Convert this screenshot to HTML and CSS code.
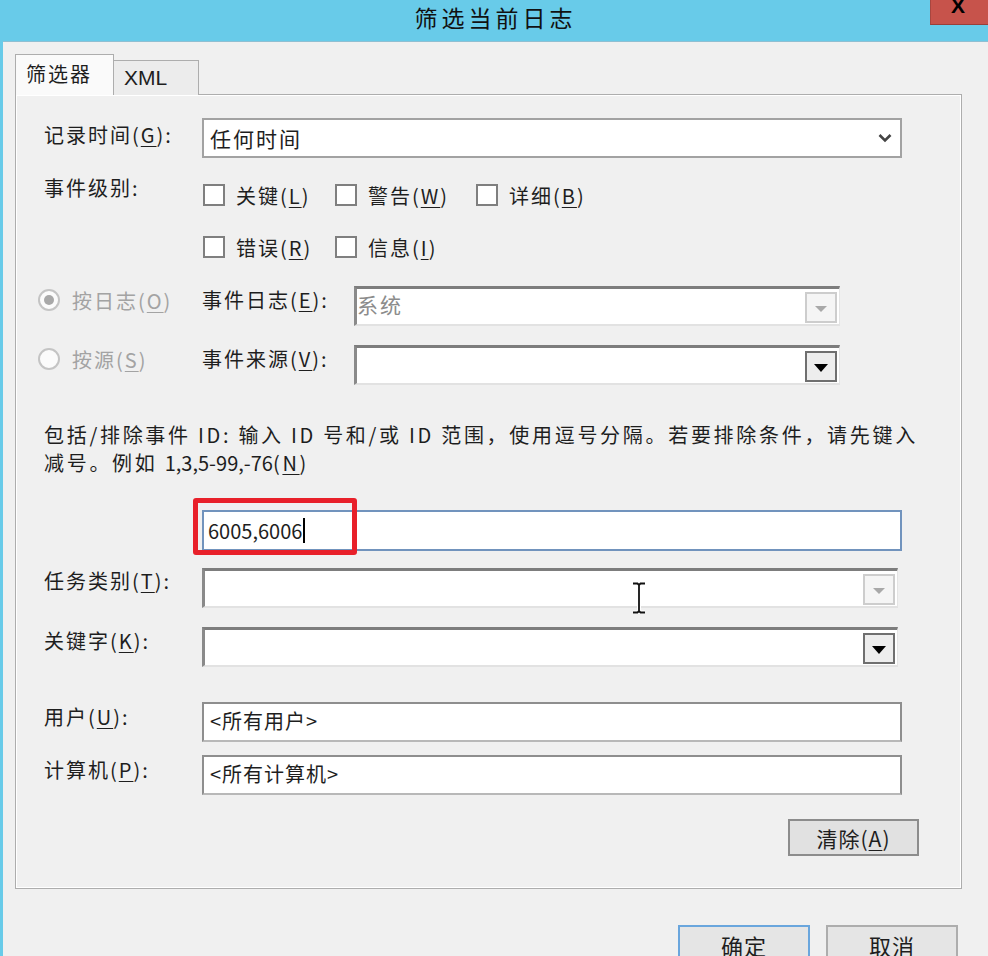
FILE: index.html
```html
<!DOCTYPE html>
<html lang="zh-CN">
<head>
    <meta charset="UTF-8">
    <title>筛选当前日志</title>
    <link rel="stylesheet" href="styles.css">
</head>
<body>
    <div class="window">
        <div class="titlebar">
            <span class="title">筛选当前日志</span>
            <div class="close">X</div>
        </div>

        <div class="dialog">
            <div class="tabs">
                <div class="tab active">筛选器</div>
                <div class="tab">XML</div>
            </div>

            <div class="panel">
                <!-- 记录时间 -->
                <div class="row row-time">
                    <label class="label">记录时间(<u>G</u>):</label>
                    <div class="select">
                        <span>任何时间</span>
                        <svg class="chevron" width="14" height="10" viewBox="0 0 14 10">
                            <path d="M1.5 2 L7 7.5 L12.5 2" fill="none" stroke="#444" stroke-width="2.6"/>
                        </svg>
                    </div>
                </div>

                <!-- 事件级别 -->
                <div class="row row-levels">
                    <label class="label">事件级别:</label>
                    <div class="checks">
                        <div class="check"><span class="box"></span>关键(<u>L</u>)</div>
                        <div class="check"><span class="box"></span>警告(<u>W</u>)</div>
                        <div class="check"><span class="box"></span>详细(<u>B</u>)</div>
                        <div class="check"><span class="box"></span>错误(<u>R</u>)</div>
                        <div class="check"><span class="box"></span>信息(<u>I</u>)</div>
                    </div>
                </div>

                <!-- 按日志 / 按源 -->
                <div class="row row-radio row-log">
                    <div class="radio disabled"><span class="dot checked"></span>按日志(<u>O</u>)</div>
                    <label class="label-sm">事件日志(<u>E</u>):</label>
                    <div class="combo disabled">
                        <span class="value">系统</span>
                        <span class="drop"><i></i></span>
                    </div>
                </div>
                <div class="row row-radio row-source">
                    <div class="radio disabled"><span class="dot"></span>按源(<u>S</u>)</div>
                    <label class="label-sm">事件来源(<u>V</u>):</label>
                    <div class="combo">
                        <span class="value"></span>
                        <span class="drop"><i></i></span>
                    </div>
                </div>

                <p class="hint">包括/排除事件 ID: 输入 ID 号和/或 ID 范围，使用逗号分隔。若要排除条件，请先键入<br>减号。例如 <span class="nums">1,3,5-99,-76</span>(<u>N</u>)</p>

                <div class="row row-id">
                    <div class="input focus">6005,6006<span class="caret"></span></div>
                    <div class="mark"></div>
                </div>

                <div class="row row-task">
                    <label class="label">任务类别(<u>T</u>):</label>
                    <div class="combo short disabled">
                        <span class="value"></span>
                        <span class="drop"><i></i></span>
                    </div>
                    <svg class="ibeam" width="18" height="32" viewBox="0 0 18 32">
                        <path d="M3 1.5 H7.5 L9 3 L10.5 1.5 H15 M9 3 V29 M3 30.5 H7.5 L9 29 L10.5 30.5 H15" fill="none" stroke="#fff" stroke-width="4"/>
                        <path d="M3 1.5 H7.5 L9 3 L10.5 1.5 H15 M9 3 V29 M3 30.5 H7.5 L9 29 L10.5 30.5 H15" fill="none" stroke="#111" stroke-width="1.8"/>
                    </svg>
                </div>

                <div class="row row-keyword">
                    <label class="label">关键字(<u>K</u>):</label>
                    <div class="combo short">
                        <span class="value"></span>
                        <span class="drop"><i></i></span>
                    </div>
                </div>

                <div class="row row-user">
                    <label class="label">用户(<u>U</u>):</label>
                    <div class="input">&lt;所有用户&gt;</div>
                </div>

                <div class="row row-computer">
                    <label class="label">计算机(<u>P</u>):</label>
                    <div class="input">&lt;所有计算机&gt;</div>
                </div>

                <button class="btn btn-clear">清除(<u>A</u>)</button>
            </div>

            <div class="actions">
                <button class="btn btn-ok">确定</button>
                <button class="btn">取消</button>
            </div>
        </div>
    </div>
</body>
</html>
```

FILE: styles.css
```css
body {
    margin: 0;
    width: 988px;
    height: 956px;
    overflow: hidden;
    background-color: #f0f0f0;
    font-family: "Noto Sans CJK SC", "Noto Sans", sans-serif;
    font-size: 20px;
    letter-spacing: 2px;
    color: #1e1e1e;
}

u {
    text-decoration: underline;
    text-underline-offset: 3px;
    text-decoration-thickness: 1px;
}

.window {
    height: 956px;
    border-left: 3px solid #68cbe9;
    box-sizing: border-box;
}

/* title bar */
.titlebar {
    position: relative;
    height: 42px;
    background-color: #68cbe9;
    border-bottom: 1px solid #8fbfd2;
    box-sizing: border-box;
    text-align: center;
}

.title {
    font-size: 23px;
    letter-spacing: 4px;
    line-height: 34px;
    color: #111;
}

.close {
    position: absolute;
    top: 0;
    right: -10px;
    width: 68px;
    height: 25px;
    background-color: #c7534b;
    border-bottom: 1px solid #9a3f39;
    border-left: 1px solid #a8463f;
    box-sizing: border-box;
    padding-left: 20px;
    text-align: left;
    font-family: "Liberation Sans", sans-serif;
    font-weight: bold;
    font-size: 21px;
    line-height: 12px;
    letter-spacing: 0;
    color: #000;
}

.dialog {
    padding: 12px 0 0 12px;
}

/* tabs */
.tabs {
    display: flex;
    align-items: flex-end;
    height: 41px;
    position: relative;
    z-index: 1;
    margin-bottom: -1px;
}

.tab {
    height: 35px;
    padding: 0 10px;
    border: 1px solid #adadad;
    border-bottom: none;
    background-color: #ececec;
    line-height: 34px;
    font-size: 20px;
    letter-spacing: 1px;
    box-sizing: border-box;
    margin-left: -1px;
}

.tab.active {
    height: 41px;
    width: 99px;
    margin-left: 0;
    padding: 0 10px;
    background-color: #fafafa;
    line-height: 38px;
    letter-spacing: 2px;
}

.tab:not(.active) {
    width: 86px;
    font-family: "Liberation Sans", sans-serif;
    letter-spacing: 0;
    font-size: 21px;
}

/* panel */
.panel {
    width: 947px;
    height: 795px;
    box-sizing: border-box;
    border: 1px solid #adadad;
    box-shadow: inset 1px 1px 0 #fff, inset -1px -1px 0 #fff;
    padding: 23px 59px 0 28px;
    display: flex;
    flex-direction: column;
}

.row {
    display: flex;
    align-items: flex-start;
    position: relative;
}

.label {
    width: 158px;
    flex-shrink: 0;
    white-space: nowrap;
}

.label-sm {
    width: 152px;
    flex-shrink: 0;
    white-space: nowrap;
    line-height: 28px;
}

.row-time .label { line-height: 34px; }
.row-task .label { line-height: 26px; }
.row-keyword .label { line-height: 28px; }
.row-user .label,
.row-computer .label { line-height: 30px; }

/* modern select */
.select {
    width: 700px;
    height: 40px;
    box-sizing: border-box;
    border: 2px solid #a2a2a2;
    background-color: #fff;
    display: flex;
    align-items: center;
    justify-content: space-between;
    padding: 0 8px 0 6px;
}

.select span {
    font-size: 21px;
}

/* event levels */
.row-levels {
    margin-top: 22px;
}

.row-levels .label {
    line-height: 16px;
}

.checks {
    display: grid;
    grid-template-columns: 132px 141px auto;
    row-gap: 22px;
}

.check {
    display: flex;
    align-items: center;
    height: 30px;
    white-space: nowrap;
}

.box {
    width: 22px;
    height: 22px;
    box-sizing: border-box;
    border: 2px solid #7f7f7f;
    background-color: #fff;
    margin: 0 11px 0 1px;
}

/* radios */
.row-radio {
    margin-left: -6px;
}

.row-log { margin-top: 24px; }
.row-source { margin-top: 19px; }

.radio {
    width: 164px;
    flex-shrink: 0;
    display: flex;
    align-items: center;
    height: 28px;
    white-space: nowrap;
}

.radio.disabled {
    color: #a3a3a3;
}

.dot {
    width: 22px;
    height: 22px;
    box-sizing: border-box;
    border: 2px solid #c4c4c4;
    border-radius: 50%;
    background-color: #fbfbfb;
    margin-right: 12px;
    display: flex;
    align-items: center;
    justify-content: center;
}

.dot.checked::after {
    content: "";
    width: 10px;
    height: 10px;
    border-radius: 50%;
    background-color: #a8a8a8;
}

/* old style combo */
.combo {
    width: 486px;
    height: 40px;
    box-sizing: border-box;
    background-color: #fff;
    border-top: 3px solid #7d7d7d;
    border-left: 3px solid #8a8a8a;
    border-right: 1px solid #e4e4e4;
    border-bottom: 2px solid #e2e2e2;
    display: flex;
    align-items: center;
    justify-content: space-between;
    padding: 0 2px 0 0;
}

.combo.short {
    width: 696px;
}

.combo .value {
    font-size: 21px;
    line-height: 30px;
    align-self: flex-start;
}

.combo.disabled .value {
    color: #8c8c8c;
}

.drop {
    width: 32px;
    height: 31px;
    box-sizing: border-box;
    border: 2px solid #6f6f6f;
    background-color: #ededed;
    display: flex;
    align-items: center;
    justify-content: center;
    margin-top: 1px;
}

.drop i {
    width: 0;
    height: 0;
    border-left: 7px solid transparent;
    border-right: 7px solid transparent;
    border-top: 8px solid #000;
    margin-top: 4px;
}

.combo.disabled .drop {
    border-color: #cdcdcd;
    background-color: #f5f5f5;
}

.combo.disabled .drop i {
    border-top-color: #a9a9a9;
    border-left-width: 6px;
    border-right-width: 6px;
    border-top-width: 6px;
}

/* hint text */
.hint {
    margin: 36px 0 0 0;
    line-height: 28px;
    font-size: 20px;
    letter-spacing: 2.7px;
    white-space: nowrap;
}

.hint .nums {
    letter-spacing: 0;
}

/* text inputs */
.input {
    width: 700px;
    height: 40px;
    box-sizing: border-box;
    background-color: #fff;
    border: 2px solid #8e8e8e;
    border-bottom-color: #b8b8b8;
    padding: 0 6px;
    line-height: 34px;
    font-size: 20px;
    letter-spacing: 1px;
}

.input.focus {
    height: 41px;
    border-color: #7193bd;
    letter-spacing: 0;
    display: flex;
    align-items: center;
    padding-left: 4px;
}

.caret {
    width: 2px;
    height: 25px;
    background-color: #000;
    margin-left: 1px;
}

.row-id {
    margin: 33px 0 0 158px;
}

.mark {
    position: absolute;
    left: -9px;
    top: -12px;
    width: 164px;
    height: 57px;
    box-sizing: border-box;
    border: 5px solid #e8202a;
    border-radius: 3px;
}

.row-task { margin-top: 17px; }
.row-keyword { margin-top: 19px; }
.row-user { margin-top: 35px; }
.row-computer { margin-top: 13px; }

.ibeam {
    position: absolute;
    left: 586px;
    top: 14px;
}

/* buttons */
.btn {
    font-family: inherit;
    font-size: 21px;
    letter-spacing: 1px;
    color: #1e1e1e;
    background-color: #e1e1e1;
    border: 2px solid #8c8c8c;
    width: 132px;
    height: 37px;
    padding: 0;
    box-sizing: border-box;
}

.btn-clear {
    align-self: flex-end;
    margin: 24px -17px 0 0;
    width: 131px;
}

.actions {
    display: flex;
    justify-content: flex-end;
    gap: 16px;
    padding: 36px 30px 0 0;
}

.actions .btn {
    height: 40px;
    font-size: 22px;
    line-height: 36px;
    align-items: flex-start;
    border-color: #adadad;
    background-color: #e5e5e5;
}

.actions .btn-ok {
    border-color: #6aa6dd;
}
```
